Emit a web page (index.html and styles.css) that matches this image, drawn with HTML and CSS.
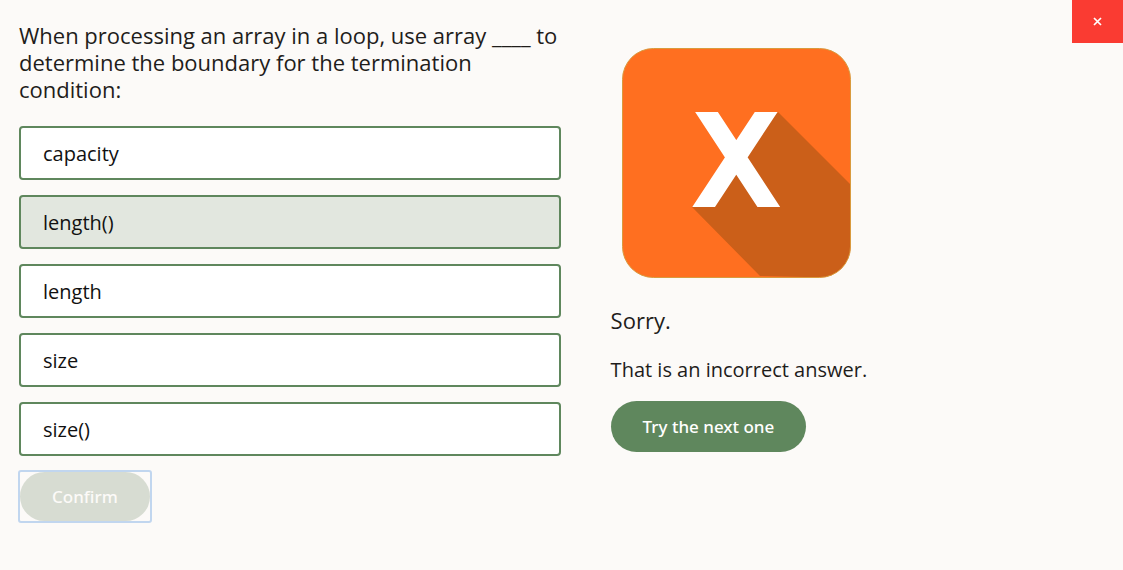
FILE: index.html
```html
<!DOCTYPE html>
<html lang="en">
<head>
<meta charset="utf-8">
<meta name="viewport" content="width=device-width, initial-scale=1">
<title>Quiz</title>
<link rel="stylesheet" href="styles.css">
</head>
<body>
<button class="close" type="button" aria-label="Close">
  <svg width="9" height="9" viewBox="0 0 9 9" aria-hidden="true"><path d="M1 1l7 7M8 1l-7 7" stroke="#fff" stroke-width="1.7" fill="none"/></svg>
</button>
<main class="quiz">
  <form class="quiz-form">
    <h1 class="question" id="question">When processing an array in a loop, use array ____ to determine the boundary for the termination condition:</h1>
    <div class="options" role="radiogroup" aria-labelledby="question">
      <label class="option"><input class="option-input" type="radio" name="answer">capacity</label>
      <label class="option"><input class="option-input" type="radio" name="answer" checked>length()</label>
      <label class="option"><input class="option-input" type="radio" name="answer">length</label>
      <label class="option"><input class="option-input" type="radio" name="answer">size</label>
      <label class="option"><input class="option-input" type="radio" name="answer">size()</label>
    </div>
    <div class="confirm-frame"><button class="button button-disabled" type="button" disabled>Confirm</button></div>
  </form>
  <section class="result">
    <svg class="result-icon" width="229" height="230" viewBox="0 0 229 230" role="img" aria-label="Incorrect">
      <defs>
        <clipPath id="tile"><rect x="0.5" y="0.5" width="228" height="229" rx="31"/></clipPath>
        <clipPath id="band"><rect x="60" y="64" width="110" height="95"/></clipPath>
      </defs>
      <rect x="0.5" y="0.5" width="228" height="229" rx="31" fill="#ff6f20"/>
      <path clip-path="url(#tile)" d="M156 64L229 137V230L138 228L70 159L114 112Z" fill="#cb5f19"/>
      <rect x="0.5" y="0.5" width="228" height="229" rx="31" fill="none" stroke="#d99a3e"/>
      <path clip-path="url(#band)" d="M78 54.1L153.1 168.6M150.7 54.1L75.3 168.6" stroke="#fff" stroke-width="19" fill="none"/>
    </svg>
    <h2 class="result-title">Sorry.</h2>
    <p class="result-text">That is an incorrect answer.</p>
    <button class="button" type="button">Try the next one</button>
  </section>
</main>
</body>
</html>
```
FILE: styles.css
```css
* { box-sizing: border-box; }
body {
  margin: 0;
  background: #fcfaf8;
  color: #1f1d1b;
  font-family: "Open Sans", "Noto Sans", sans-serif;
}
.close {
  position: absolute;
  top: 0;
  right: 0;
  display: grid;
  place-items: center;
  width: 51px;
  height: 43px;
  padding: 0;
  border: 0;
  background: #fa3b32;
}
.quiz {
  display: grid;
  grid-template-columns: 11fr 10fr;
  gap: 50px;
  padding: 22px 20px 40px 19px;
}
.question {
  margin: 0 0 23px;
  font-size: 22px;
  line-height: 27px;
  font-weight: 400;
}
.options {
  display: grid;
  gap: 15px;
}
.option {
  display: flex;
  align-items: center;
  height: 54px;
  padding: 0 22px;
  border: 2px solid #5f875d;
  border-radius: 4px;
  background: #fff;
  color: #111;
  font-size: 20px;
}
.option:has(:checked) { background: #e2e7df; }
.option-input {
  appearance: none;
  width: 0;
  height: 0;
  margin: 0;
}
.confirm-frame {
  width: fit-content;
  margin: 14px 0 0 -1px;
  border: 2px solid #c1d6ef;
  border-radius: 3px;
}
.button {
  display: block;
  height: 51px;
  padding: 0 32px;
  border: 0;
  border-radius: 26px;
  background: #5f875d;
  color: #fff;
  font: 500 17px "Noto Sans", "Open Sans", sans-serif;
}
.button-disabled {
  height: 49px;
  background: #d7dcd2;
  color: #fcfaf8;
}
.result { padding-top: 26px; }
.result-icon {
  display: block;
  margin-left: 11px;
}
.result-title {
  margin: 27px 0 21px;
  font-size: 22px;
  line-height: 30px;
  font-weight: 400;
}
.result-text {
  margin: 0 0 18px;
  font-size: 20px;
  line-height: 27px;
}
```
